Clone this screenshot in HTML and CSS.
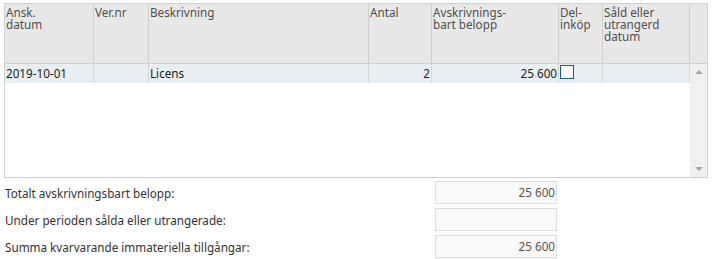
FILE: index.html
```html
<!DOCTYPE html>
<html lang="sv">
<head>
  <meta charset="UTF-8" />
  <title>Immateriella tillgångar</title>
  <link rel="stylesheet" href="styles.css">
</head>
<body>

  <!-- Grid with assets -->
  <div class="grid">
    <div class="grid-head">
      <div class="hcell">Ansk.<br>datum</div>
      <div class="hcell">Ver.nr</div>
      <div class="hcell">Beskrivning</div>
      <div class="hcell">Antal</div>
      <div class="hcell">Avskrivnings-<br>bart belopp</div>
      <div class="hcell">Del-<br>inköp</div>
      <div class="hcell">Såld eller<br>utrangerd<br>datum</div>
      <div class="hcell last"></div>
    </div>
    <div class="grid-body">
      <div class="rows">
        <div class="row">
          <div class="cell">2019-10-01</div>
          <div class="cell"></div>
          <div class="cell">Licens</div>
          <div class="cell num">2</div>
          <div class="cell num">25 600</div>
          <div class="cell"><span class="check"></span></div>
          <div class="cell"></div>
        </div>
      </div>
      <div class="scrollbar">
        <span class="arrow up"></span>
        <span class="arrow down"></span>
      </div>
    </div>
  </div>

  <!-- Totals -->
  <div class="totals">
    <div class="total-row">
      <span class="label">Totalt avskrivningsbart belopp:</span>
      <div class="field">25 600</div>
    </div>
    <div class="total-row">
      <span class="label">Under perioden sålda eller utrangerade:</span>
      <div class="field"></div>
    </div>
    <div class="total-row">
      <span class="label">Summa kvarvarande immateriella tillgångar:</span>
      <div class="field">25 600</div>
    </div>
  </div>

</body>
</html>
```

FILE: styles.css
```css
body {
  margin: 0;
  padding: 3px 0 0 4px;
  font-family: 'Noto Sans', 'Open Sans', sans-serif;
  font-size: 11.7px;
  color: #333;
  background: #fff;
}

.grid {
  width: 704px;
  height: 175px;
  border: 1px solid #d0d0d0;
  box-sizing: border-box;
}

.grid-head,
.row {
  display: grid;
  grid-template-columns: 89px 55px 220px 63px 127px 44px 87px;
}

.grid-head {
  grid-template-columns: 89px 55px 220px 63px 127px 44px 87px 1fr;
  height: 60px;
  background: #e8e8e8;
  border-bottom: 1px solid #cfcfcf;
  box-sizing: border-box;
}

.hcell {
  padding: 2px 1px 0;
  line-height: 12px;
  color: #505050;
  border-right: 1px solid #cfcfcf;
}

.hcell.last {
  border-right: none;
}

.grid-body {
  display: flex;
  height: 113px;
}

.rows {
  width: 685px;
}

.row {
  height: 19px;
  background: #e8eff3;
}

.cell {
  padding: 0 1px;
  line-height: 19px;
  color: #222;
  border-right: 1px solid #d8d8d8;
  white-space: nowrap;
}

.cell.num {
  text-align: right;
}

.check {
  display: block;
  width: 14px;
  height: 14px;
  margin-top: 1px;
  border: 1px solid #1f5a8c;
  background: #fff;
  box-sizing: border-box;
}

.scrollbar {
  flex: 1;
  background: #f0f0f0;
  position: relative;
}

.arrow {
  position: absolute;
  left: 5px;
  width: 0;
  height: 0;
  border-left: 4px solid transparent;
  border-right: 4px solid transparent;
}

.arrow.up {
  top: 6px;
  border-bottom: 4px solid #a6a6a6;
}

.arrow.down {
  bottom: 6px;
  border-top: 4px solid #a6a6a6;
}

.totals {
  width: 553px;
  margin-top: 3px;
}

.total-row {
  display: flex;
  justify-content: space-between;
  align-items: center;
  margin-bottom: 4px;
}

.label {
  padding-left: 1px;
  color: #333;
}

.field {
  width: 122px;
  height: 23px;
  line-height: 21px;
  padding-right: 1px;
  text-align: right;
  color: #555;
  background: #f9f9f9;
  border: 1px solid #dcdcdc;
  box-sizing: border-box;
}
```
